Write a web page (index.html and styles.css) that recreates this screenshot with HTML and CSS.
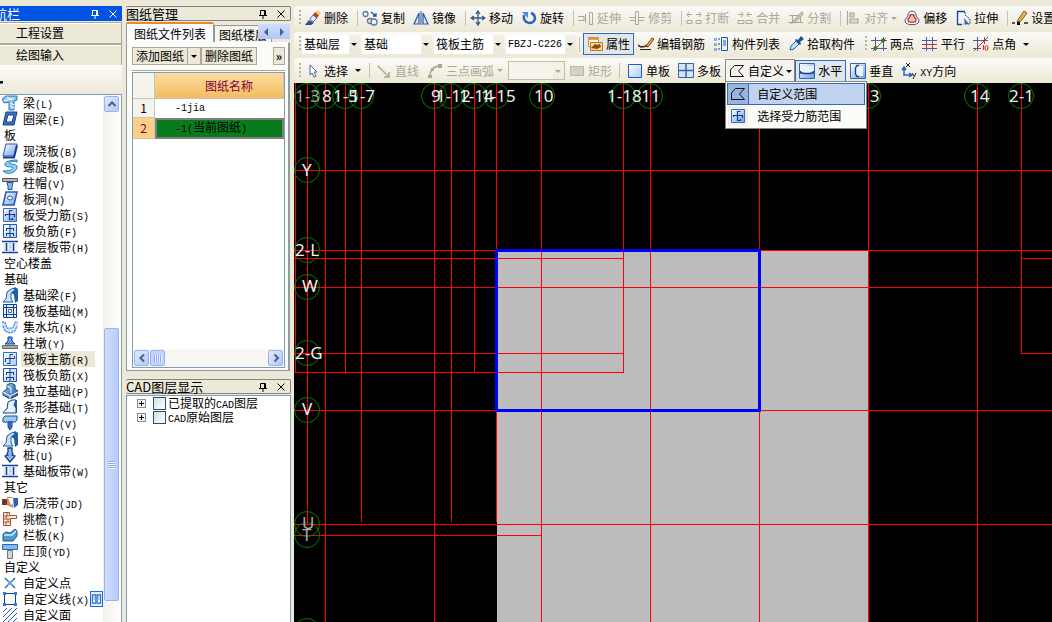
FILE: index.html
```html
<!DOCTYPE html>
<html lang="zh-CN">
<head>
<meta charset="utf-8">
<title>图纸管理</title>
<link rel="stylesheet" href="styles.css">
</head>
<body>
<svg class="defs" aria-hidden="true">
  <defs>
    <linearGradient id="gb" x1="0" y1="0" x2="1" y2="1"><stop offset="0" stop-color="#fff"/><stop offset="1" stop-color="#6f9fe8"/></linearGradient>
    <linearGradient id="gl" x1="0" y1="0" x2="1" y2="1"><stop offset="0" stop-color="#fff"/><stop offset="1" stop-color="#a9c8f6"/></linearGradient>
    <linearGradient id="gd" x1="0" y1="0" x2="1" y2="1"><stop offset="0" stop-color="#9fd0f4"/><stop offset="1" stop-color="#174f9c"/></linearGradient>
    <symbol id="pin" viewBox="0 0 10 10"><path d="M2.500 1.500h5v5M2.500 1.500v5M6.500 1.500v5M1 6.500h8M5 7v3" fill="none" stroke="currentColor"/></symbol>
    <symbol id="close" viewBox="0 0 10 10"><path d="M1.500 1.500l7 7M8.500 1.500l-7 7" fill="none" stroke="currentColor"/></symbol>
    <symbol id="beam" viewBox="0 0 16 16"><path d="M0 4l4-3h11v4l-3 1v9H7V7L2 8z" fill="#8cc4ee" stroke="#2a78b8"/><path d="M2 6l10-3M5 2l5 3M8 8l4 2M8 11l4 2" stroke="#f2faff" stroke-width="1.300"/></symbol>
    <symbol id="ring" viewBox="0 0 16 16"><path d="M4 1h11l-3 13H1z" fill="#3f71c4" stroke="#123f91"/><path d="M6 4h6l-2 7H4z" fill="#fff" stroke="#123f91"/></symbol>
    <symbol id="slab" viewBox="0 0 16 16"><path d="M4 1h11l-3 12H1z" fill="url(#gb)" stroke="#2458b0"/><path d="M1 14.500h11l3-12" fill="none" stroke="#123f91" stroke-width="2"/></symbol>
    <symbol id="spiral" viewBox="0 0 16 16"><path d="M15 1C8 1 2 3 3 6c1 3 8 1 8 3s-5 3-10 3c5 5 14 1 14-4 0-4-8-2-8-4 0-1 4-2 8-1z" fill="#8fd4f4" stroke="#2878b8"/></symbol>
    <symbol id="cap" viewBox="0 0 16 16"><path d="M.500 3.500h15v3H.500z" fill="#b8b8b0" stroke="#555"/><path d="M5 7.500h6l-1 4v3H6v-3z" fill="#8fb8f0" stroke="#1d4ea3"/></symbol>
    <symbol id="hole" viewBox="0 0 16 16"><path d="M4 1h11l-3 13H1z" fill="url(#gb)" stroke="#2458b0" stroke-width="1.500"/><ellipse cx="8" cy="7" rx="2.500" ry="2" fill="#fff" stroke="#2458b0"/></symbol>
    <symbol id="rebar" viewBox="0 0 16 16"><path d="M1.500 1.500h13v13h-13z" fill="url(#gb)" stroke="#3d6bbd"/><path d="M3.500 9V7.500h9V10M10.500 3.500h-3v9h3V11" fill="none" stroke="#123f91" stroke-width="1.200"/></symbol>
    <symbol id="neg" viewBox="0 0 16 16"><path d="M1.500 1.500h13v13h-13z" fill="url(#gl)" stroke="#2458b0"/><path d="M8 2v12M4 5.500h8M4 10.500h8M4.500 5v3M4.500 10v3M11.500 5v3M11.500 10v3" fill="none" stroke="#123f91"/></symbol>
    <symbol id="strip" viewBox="0 0 16 16"><path d="M1 4h14v8H1z" fill="#e6effc"/><path d="M0 2.500h16M0 13.500h16" stroke="#123f91" stroke-width="1.500"/><path d="M4.500 4v8M11.500 4v8" stroke="#123f91" stroke-width="1.500"/><path d="M8 4v9" stroke="#6d90cc" stroke-dasharray="1 1"/></symbol>
    <symbol id="found" viewBox="0 0 16 16"><path d="M8 4l5-4 3 2v12l-3 2-1-8z" fill="#1d5fa8"/><path d="M5 5l6-4 2 2-4 3v6l2 3H1l3-3z" fill="#c6e1f8" stroke="#1d5fa8"/></symbol>
    <symbol id="raft" viewBox="0 0 16 16"><path d="M1.500 1.500h13v13h-13z" fill="#e3eefd" stroke="#123f91"/><path d="M4.500 1v14M11.500 1v14M1 4.500h14M1 11.500h14" stroke="#123f91"/><path d="M6.500 6.500h3v3h-3z" fill="#fff" stroke="#3c6cc0"/></symbol>
    <symbol id="sump" viewBox="0 0 16 16"><path d="M0 3h3l2 6h6l2-6h3v5l-3 5-5 2-5-2-3-5z" fill="#c9e2fb"/><path d="M0 3h3l2 6h6l2-6h3M1 7l2 5 5 2 5-2 2-5" fill="none" stroke="#2568ba" stroke-dasharray="2 1"/></symbol>
    <symbol id="pier" viewBox="0 0 16 16"><path d="M6 2h4v4l3 3H3l3-3z" fill="#6f9fe8" stroke="#123f91"/><path d="M.500 10.500h15v3H.500z" fill="#aaa" stroke="#666"/></symbol>
    <symbol id="main" viewBox="0 0 16 16"><path d="M1.500 1.500h13v13h-13z" fill="url(#gl)" stroke="#2f6fce"/><path d="M3.500 11V7.500h9V5M5 12.500h3v-9h3" fill="none" stroke="#123f91"/></symbol>
    <symbol id="iso" viewBox="0 0 16 16"><path d="M1 9l4-3V2l4-2 4 2v4l3 2v4l-8 4-7-4z" fill="url(#gd)" stroke="#123f61"/><path d="M5 3l4 2v5M1 9l7 4 8-4M8 13v3" fill="none" stroke="#fff"/></symbol>
    <symbol id="bar" viewBox="0 0 16 16"><path d="M9 1h6v13h-3z" fill="#1d5fa8"/><path d="M6 3l4-2h4l-2 5 2 3v5H1l3-4h1z" fill="#e6f3ff" stroke="#17457f"/></symbol>
    <symbol id="pcap" viewBox="0 0 16 16"><path d="M1 3l2-2h12v4l-2 2H1z" fill="#9ccaf3" stroke="#164c91"/><path d="M6 7h4v5l-2 3-2-3z" fill="#2c75c7" stroke="#164c91"/></symbol>
    <symbol id="pile" viewBox="0 0 16 16"><path d="M6 1h4v4l1 2-1 1 3 1-5 6-5-6 3-1-1-1 1-2z" fill="#8fb8f0" stroke="#123f81" stroke-width="1.300"/></symbol>
    <symbol id="pour" viewBox="0 0 16 16"><path d="M0 4h6v6H0z" fill="#6a3b28"/><path d="M5 2h6v11L5 10z" fill="#c8916f"/><path d="M6 3h5l1 5-3 2z" fill="#fff"/><path d="M11 3h5v7l-4 3z" fill="#2b63ad"/></symbol>
    <symbol id="eave" viewBox="0 0 16 16"><path d="M1.500 1.500h6v3h7v3h-6v7h-7z" fill="#fff0e4" stroke="#a65327"/><path d="M2 5h5M2 8h6M2 11h6M5 2v3M4 5v3M6 8v3M4 11v3" stroke="#a65327"/></symbol>
    <symbol id="rail" viewBox="0 0 16 16"><path d="M1 7l3-2 4 1 5-4 2 2v5l-4 5H1z" fill="#4d9bd0" stroke="#1c5684"/><path d="M2 8h8l4-4" fill="none" stroke="#c8ecff" stroke-width="1.500"/></symbol>
    <symbol id="coping" viewBox="0 0 16 16"><path d="M.500 1.500h15v5H.500z" fill="#86b8ee" stroke="#2568ba"/><path d="M5.500 7.500h5v8h-5z" fill="#d2d2d2" stroke="#777"/></symbol>
    <symbol id="pt" viewBox="0 0 16 16"><path d="M3 3l10 10M13 3L3 13" stroke="#2458b0" stroke-width="1.300"/><path d="M6 6h4v4H6z" fill="#5bb0ef"/></symbol>
    <symbol id="ln" viewBox="0 0 16 16"><path d="M2.500 2.500h11v11h-11z" fill="none" stroke="#123f91"/><path d="M1 1h3v3H1zM12 1h3v3h-3zM1 12h3v3H1zM12 12h3v3h-3z" fill="#2f7ae0"/></symbol>
    <symbol id="face" viewBox="0 0 16 16"><path d="M1 5l4-4M1 10l9-9M1 15L15 1M6 15l9-9M11 15l4-4" stroke="#2458b0"/></symbol>
    <symbol id="cols" viewBox="0 0 16 16"><path d="M2 2h5v12H2zM9 2h5v12H9z" fill="#fff" stroke="#1c6bd0" stroke-width="1.500"/><path d="M3 5h3M3 8h3M10 5h3M10 8h3" stroke="#1c6bd0"/></symbol>

    <symbol id="erase" viewBox="0 0 16 16"><path d="M0 15l4-5 5 3-3 2z" fill="#27518f"/><path d="M5 9l3-4 4 3-4 4z" fill="#e7edf7" stroke="#56719f"/><path d="M8 5l2-3 4 3-2 3z" fill="#c43b2c"/><path d="M10 2l3-2 3 3-2 2z" fill="#f3cf62"/></symbol>
    <symbol id="copy" viewBox="0 0 16 16"><g fill="#eef3f9" stroke="#5b779c" stroke-width="1.300"><circle cx="3.500" cy="4" r="2.500"/><circle cx="8" cy="11" r="2.500"/><circle cx="12" cy="12" r="3"/></g><path d="M9 2l5 4m0-3v3h-3" fill="none" stroke="#23549d" stroke-width="1.300"/></symbol>
    <symbol id="mirror" viewBox="0 0 16 16"><path d="M6 3v11H1zM10 3v11h5z" fill="#dce8fa" stroke="#2857a4" stroke-width="1.200"/><path d="M8 1v14" stroke="#2857a4"/></symbol>
    <symbol id="move" viewBox="0 0 16 16"><path d="M8 1v14M1 8h14M6 4l2-3 2 3M6 12l2 3 2-3M4 6L1 8l3 2M12 6l3 2-3 2" fill="none" stroke="#36588c" stroke-width="1.300"/></symbol>
    <symbol id="rotate" viewBox="0 0 16 16"><path d="M3 5c-2 8 9 11 11 4 0-3-1-5-4-6" fill="none" stroke="#2762c3" stroke-width="2.500"/><path d="M1 2h6v6z" fill="#4e8be0"/></symbol>
    <symbol id="extend" viewBox="0 0 16 16"><path d="M0 6.500h6v4H0M7.500 4v9M11.500 2.500h3v12h-3z" fill="none" stroke="#aca899"/></symbol>
    <symbol id="trim" viewBox="0 0 16 16"><path d="M0 7.500h6M10 7.500h6M1 10.500h5M10 10.500h5M6.500 1.500h3v13h-3z" fill="none" stroke="#aca899"/></symbol>
    <symbol id="brk" viewBox="0 0 16 16"><path d="M1 4.500h5M10 4.500h5M3 2L1 4.500 3 7M13 2l2 2.500L13 7M1 10.500h5v3H1zM10 10.500h5v3h-5z" fill="none" stroke="#aca899"/></symbol>
    <symbol id="join" viewBox="0 0 16 16"><path d="M1 4.500h5M10 4.500h5M4 2l2 2.500L4 7M12 2l-2 2.500L12 7M1 10.500h6v3H1zM9 10.500h6v3H9z" fill="none" stroke="#aca899"/></symbol>
    <symbol id="split" viewBox="0 0 16 16"><path d="M1 5.500h9M0 12.500h15M3 14L14 2l1 2L6 13M4.500 5v8M12.500 7v6" fill="none" stroke="#aca899" stroke-width="1.200"/></symbol>
    <symbol id="align" viewBox="0 0 16 16"><path d="M2.500 1v14M5 3h4v4H5zM5 9h8v4H5z" fill="#ddd9ca" stroke="#aca899" stroke-width="1.200"/></symbol>
    <symbol id="offset" viewBox="0 0 16 16"><path d="M1 11c0-3 3-3 3-6 0-5 8-5 8 0 0 3 3 3 3 6 0 5-14 5-14 0z" fill="#fff" stroke="#274f89"/><path d="M4 10c0-2 2-2 2-4 0-2 4-2 4 0 0 2 2 2 2 4 0 3-8 3-8 0z" fill="#f5c4bc" stroke="#c83828" stroke-width="1.500"/></symbol>
    <symbol id="stretch" viewBox="0 0 16 16"><path d="M10 1.500H2.500v13H7" fill="#eef3fd" stroke="#174981" stroke-width="1.300"/><path d="M10 2v3l5 4v5H8" fill="none" stroke="#174981" stroke-dasharray="2 1"/><path d="M9 8l5 6h-4z" fill="#2c64b6"/></symbol>
    <symbol id="setup" viewBox="0 0 16 16"><path d="M0 13h3M12 13h4" stroke="#222" stroke-width="1.500"/><path d="M5 12h3v3H5z"/><path d="M6 10l6-9 3 2-6 8-4 1z" fill="#e7b849" stroke="#8a5a1c"/></symbol>
    <symbol id="prop" viewBox="0 0 16 16"><path d="M1.500 1.500h10v9h-10z" fill="#fff" stroke="#c38b3c"/><path d="M1 2h11v2H1z" fill="#e89a39"/><path d="M3.500 6.500h12v8h-12z" fill="#fbd687" stroke="#bd7820"/><path d="M4 12l4-4 2 1 3-1 1 3-4 2z" fill="#7e5011"/></symbol>
    <symbol id="edit" viewBox="0 0 16 16"><path d="M2 13.500h11" stroke="#222"/><path d="M8 10l6-8 2 1-6 8z" fill="#e7b849" stroke="#7a4018"/><path d="M0 9l3 2 6-1" fill="none" stroke="#222" stroke-width="1.500"/><path d="M6 11l3-2" stroke="#b52b20" stroke-width="1.500"/></symbol>
    <symbol id="list" viewBox="0 0 16 16"><path d="M1 2h3v3H1zM1 7h3v3H1zM1 12h3v3H1z" fill="#8caee0"/><path d="M5 3h2M5 8h2M5 13h2" stroke="#174981"/><path d="M8.500 1.500h6v13h-6z" fill="#e9f2ff" stroke="#2458b0"/><path d="M10 5h3M10 7h3M10 9h3" stroke="#2458b0"/></symbol>
    <symbol id="pick" viewBox="0 0 16 16"><path d="M2 14l1-4 5-5 3 3-5 5z" fill="#c4e1fa" stroke="#315f97"/><path d="M7 4l1-1 2 1 3-4 3 3-4 3 1 2-1 1z" fill="#12569f"/></symbol>
    <symbol id="twopt" viewBox="0 0 16 16"><path d="M4.500 1v14M12.500 1v14M0 4.500h16M0 12.500h16" stroke="#4d5e9c"/><path d="M2 15L15 2" stroke="#c33"/><circle cx="4.500" cy="12" r="2" fill="#30751f"/><circle cx="12" cy="4.500" r="2" fill="#30751f"/></symbol>
    <symbol id="para" viewBox="0 0 16 16"><path d="M4.500 1v14M10.500 1v14M0 4.500h15M0 12.500h15" stroke="#4d5e9c"/><path d="M0 8.500h15" stroke="#d22"/></symbol>
    <symbol id="angle" viewBox="0 0 16 16"><path d="M4.500 1v14M11.500 1v7M0 4.500h15M0 12.500h8" stroke="#4d5e9c"/><path d="M1 15L15 1M10.500 9v5" stroke="#d22"/><ellipse cx="13.500" cy="12" rx="1.500" ry="2.500" fill="none" stroke="#d22"/></symbol>
    <symbol id="cursor" viewBox="0 0 16 16"><path d="M5 2v10l2-2 2 4 2-1-2-4h3z" fill="#fff" stroke="#45699d"/></symbol>
    <symbol id="line" viewBox="0 0 16 16"><path d="M2 3l11 11M13 9v5H8" fill="none" stroke="#aca899" stroke-width="1.500"/></symbol>
    <symbol id="arc" viewBox="0 0 16 16"><path d="M3 14C3 7 6 3 13 3" fill="none" stroke="#aca899" stroke-width="1.500"/><path d="M1 12h4v3H1zM4 5h3v3H4zM11 1h4v4h-4z" fill="#aca899"/></symbol>
    <symbol id="rect" viewBox="0 0 16 16"><path d="M1.500 3.500h13v9h-13z" fill="#d5d1c4" stroke="#bdb9aa"/></symbol>
    <symbol id="single" viewBox="0 0 16 16"><path d="M1.500 1.500h13v13h-13z" fill="url(#gl)" stroke="#2458c8"/></symbol>
    <symbol id="multi" viewBox="0 0 16 16"><path d="M.500.500h15v14H.500z" fill="#d5e6fb" stroke="#3b659c"/><path d="M8 1v14M1 7.500h15" stroke="#3b659c" stroke-width="1.500"/></symbol>
    <symbol id="poly" viewBox="0 0 16 16"><path d="M1.500 13.500V7l4-4.500h9L9.500 8l5 5.500z" fill="none" stroke="#111"/></symbol>
    <symbol id="horiz" viewBox="0 0 16 16"><path d="M.500.500h15v15H.500z" fill="url(#gb)" stroke="#3764b4"/><path d="M1 8h2v2h10V8h2V3H1z" fill="#eaf2fe"/><path d="M1.500 8v2h3M14.500 8v2h-3M4 10.500h8" fill="none" stroke="#173f83" stroke-width="1.300"/></symbol>
    <symbol id="vert" viewBox="0 0 16 16"><path d="M.500.500h15v15H.500z" fill="url(#gb)" stroke="#3764b4"/><path d="M5 3h8v10H5z" fill="#eaf2fe"/><path d="M9 2.500H7L5.500 5v6L7 13.500h2" fill="none" stroke="#173f83" stroke-width="1.300"/></symbol>
    <symbol id="xy" viewBox="0 0 16 16"><path d="M3 5v7h7M1 7l2-3 2 3M8 10l3 2-3 2" fill="none" stroke="#2762c3" stroke-width="1.500"/><path d="M5 0l4 4M9 0L5 4M11 10l2 3M15 10l-3 6" stroke="#222"/></symbol>
  </defs>
</svg>

<div class="app">
  <aside class="nav">
    <header class="nav-title"><span class="nav-name">航栏</span><button class="tool-btn" aria-label="固定"><svg><use href="#pin"/></svg></button><button class="tool-btn" aria-label="关闭"><svg><use href="#close"/></svg></button></header>
    <button class="group">工程设置</button>
    <button class="group">绘图输入</button>
    <div class="nav-strip"><i></i></div>
    <div class="nav-body">
      <ul class="tree">
        <li><svg><use href="#beam"/></svg><span>梁<b>(L)</b></span></li>
        <li><svg><use href="#ring"/></svg><span>圈梁<b>(E)</b></span></li>
        <li class="cat">板</li>
        <li><svg><use href="#slab"/></svg><span>现浇板<b>(B)</b></span></li>
        <li><svg><use href="#spiral"/></svg><span>螺旋板<b>(B)</b></span></li>
        <li><svg><use href="#cap"/></svg><span>柱帽<b>(V)</b></span></li>
        <li><svg><use href="#hole"/></svg><span>板洞<b>(N)</b></span></li>
        <li><svg><use href="#rebar"/></svg><span>板受力筋<b>(S)</b></span></li>
        <li><svg><use href="#neg"/></svg><span>板负筋<b>(F)</b></span></li>
        <li><svg><use href="#strip"/></svg><span>楼层板带<b>(H)</b></span></li>
        <li class="cat">空心楼盖</li>
        <li class="cat">基础</li>
        <li><svg><use href="#found"/></svg><span>基础梁<b>(F)</b></span></li>
        <li><svg><use href="#raft"/></svg><span>筏板基础<b>(M)</b></span></li>
        <li><svg><use href="#sump"/></svg><span>集水坑<b>(K)</b></span></li>
        <li><svg><use href="#pier"/></svg><span>柱墩<b>(Y)</b></span></li>
        <li class="sel"><svg><use href="#main"/></svg><span>筏板主筋<b>(R)</b></span></li>
        <li><svg><use href="#neg"/></svg><span>筏板负筋<b>(X)</b></span></li>
        <li><svg><use href="#iso"/></svg><span>独立基础<b>(P)</b></span></li>
        <li><svg><use href="#bar"/></svg><span>条形基础<b>(T)</b></span></li>
        <li><svg><use href="#pcap"/></svg><span>桩承台<b>(V)</b></span></li>
        <li><svg><use href="#found"/></svg><span>承台梁<b>(F)</b></span></li>
        <li><svg><use href="#pile"/></svg><span>桩<b>(U)</b></span></li>
        <li><svg><use href="#strip"/></svg><span>基础板带<b>(W)</b></span></li>
        <li class="cat">其它</li>
        <li><svg><use href="#pour"/></svg><span>后浇带<b>(JD)</b></span></li>
        <li><svg><use href="#eave"/></svg><span>挑檐<b>(T)</b></span></li>
        <li><svg><use href="#rail"/></svg><span>栏板<b>(K)</b></span></li>
        <li><svg><use href="#coping"/></svg><span>压顶<b>(YD)</b></span></li>
        <li class="cat">自定义</li>
        <li><svg><use href="#pt"/></svg><span>自定义点</span></li>
        <li><svg><use href="#ln"/></svg><span>自定义线<b>(X)</b></span><svg class="framed"><use href="#cols"/></svg></li>
        <li><svg><use href="#face"/></svg><span>自定义面</span></li>
      </ul>
      <div class="vscroll"><button class="sb" aria-label="向上"><svg viewBox="0 0 10 10"><path d="M1.500 7L5 3.500 8.500 7"/></svg></button><div class="thumb"><i></i></div></div>
    </div>
  </aside>

  <section class="side">
    <header class="panel-title"><span>图纸管理</span><button class="tool-btn" aria-label="固定"><svg><use href="#pin"/></svg></button><button class="tool-btn" aria-label="关闭"><svg><use href="#close"/></svg></button></header>
    <div class="tabs"><button class="tab active">图纸文件列表</button><button class="tab">图纸楼层</button><div class="tab-nav"><button aria-label="上一页"><i class="left"></i></button><button aria-label="下一页"><i class="right"></i></button></div></div>
    <div class="sheet">
      <div class="sheet-tools"><button class="flat">添加图纸</button><button class="flat drop" aria-label="更多添加"><i class="down"></i></button><button class="flat">删除图纸</button><button class="flat more">»</button></div>
      <div class="grid-box">
        <table class="grid">
          <thead><tr><th></th><th class="name">图纸名称</th></tr></thead>
          <tbody><tr><th>1</th><td>-1jia</td></tr><tr class="current"><th>2</th><td>-1(<span>当前图纸</span>)</td></tr></tbody>
        </table>
        <div class="hscroll"><button class="sb" aria-label="向左"><svg viewBox="0 0 10 10"><path d="M7 1.500L3.500 5 7 8.500"/></svg></button><div class="hthumb"><i></i></div><button class="sb end" aria-label="向右"><svg viewBox="0 0 10 10"><path d="M3.500 1.500L7 5 3.500 8.500"/></svg></button></div>
      </div>
    </div>
    <header class="panel-title"><span>CAD图层显示</span><button class="tool-btn" aria-label="固定"><svg><use href="#pin"/></svg></button><button class="tool-btn" aria-label="关闭"><svg><use href="#close"/></svg></button></header>
    <div class="layers">
      <div class="layer"><button class="plus" aria-label="展开"></button><label><input type="checkbox"><span>已提取的<b>CAD</b>图层</span></label></div>
      <div class="layer"><button class="plus" aria-label="展开"></button><label><input type="checkbox"><span><b>CAD</b>原始图层</span></label></div>
    </div>
  </section>

  <main class="work">
    <div class="bars">
      <div class="bar">
        <i class="grip"></i>
        <button class="btn"><svg><use href="#erase"/></svg>删除</button><i class="sep"></i>
        <button class="btn"><svg><use href="#copy"/></svg>复制</button>
        <button class="btn"><svg><use href="#mirror"/></svg>镜像</button><i class="sep"></i>
        <button class="btn"><svg><use href="#move"/></svg>移动</button>
        <button class="btn"><svg><use href="#rotate"/></svg>旋转</button><i class="sep"></i>
        <button class="btn" disabled><svg><use href="#extend"/></svg>延伸</button>
        <button class="btn" disabled><svg><use href="#trim"/></svg>修剪</button><i class="sep"></i>
        <button class="btn" disabled><svg><use href="#brk"/></svg>打断</button>
        <button class="btn" disabled><svg><use href="#join"/></svg>合并</button>
        <button class="btn" disabled><svg><use href="#split"/></svg>分割</button><i class="sep"></i>
        <button class="btn" disabled><svg><use href="#align"/></svg>对齐<i class="down"></i></button>
        <button class="btn"><svg><use href="#offset"/></svg>偏移</button>
        <button class="btn"><svg><use href="#stretch"/></svg>拉伸</button><i class="sep"></i>
        <button class="btn"><svg><use href="#setup"/></svg>设置</button>
      </div>
      <div class="bar">
        <i class="grip"></i>
        <label class="pick short"><select aria-label="楼层"><option>基础层</option></select></label>
        <label class="pick"><select aria-label="构件类型"><option>基础</option></select></label>
        <label class="pick"><select aria-label="构件"><option>筏板主筋</option></select></label>
        <label class="pick code"><select aria-label="名称"><option>FBZJ-C226</option></select></label>
        <i class="sep tight"></i>
        <button class="btn on"><svg><use href="#prop"/></svg>属性</button>
        <button class="btn"><svg><use href="#edit"/></svg>编辑钢筋</button>
        <button class="btn"><svg><use href="#list"/></svg>构件列表</button>
        <button class="btn"><svg><use href="#pick"/></svg>拾取构件</button>
        <i class="grip second"></i>
        <button class="btn"><svg><use href="#twopt"/></svg>两点</button>
        <button class="btn"><svg><use href="#para"/></svg>平行</button>
        <button class="btn"><svg><use href="#angle"/></svg>点角<i class="down wide"></i></button>
      </div>
      <div class="bar">
        <i class="grip"></i>
        <button class="btn"><svg><use href="#cursor"/></svg>选择<i class="down wide"></i></button><i class="sep even"></i>
        <button class="btn" disabled><svg><use href="#line"/></svg>直线</button>
        <button class="btn" disabled><svg><use href="#arc"/></svg>三点画弧<i class="down"></i></button>
        <label class="pick off"><select aria-label="画弧方式" disabled><option></option></select></label>
        <button class="btn" disabled><svg><use href="#rect"/></svg>矩形</button><i class="sep tight"></i>
        <button class="btn"><svg><use href="#single"/></svg>单板</button>
        <button class="btn"><svg><use href="#multi"/></svg>多板</button>
        <div class="menu-host">
          <button class="btn open"><svg><use href="#poly"/></svg>自定义<i class="down"></i></button>
          <div class="menu">
            <button class="item hot"><span class="well"><svg><use href="#poly"/></svg></span>自定义范围</button>
            <button class="item"><span class="well"><svg><use href="#rebar"/></svg></span>选择受力筋范围</button>
          </div>
        </div>
        <button class="btn on"><svg><use href="#horiz"/></svg>水平</button>
        <button class="btn"><svg><use href="#vert"/></svg>垂直</button>
        <button class="btn"><svg><use href="#xy"/></svg><span><b>XY</b>方向</span></button>
      </div>
    </div>
    <div class="canvas">
      <svg class="plan">
        <rect x="203" y="167" width="372" height="100%" fill="#bcbcbc"/>
        <path class="axis" d="M1.500 0v290M13.500 0v441M31.500 0v2000M51.500 0v291M67.500 0v439M140.500 0v2000M157.500 0v439M180.500 0v290M202.500 0v439M247.500 0v2000M329.500 0v290M356.500 0v2000M465.500 0v2000M574.500 0v2000M683.500 0v2000M727.500 0v271M0 87.500h3000M0 167.500h3000M0 175.500h330M727 175.500h3000M0 204.500h3000M0 270.500h330M727 270.500h3000M0 289.500h330M0 327.500h3000M0 441.500h3000M0 452.500h248"/>
        <rect x="202.500" y="167.500" width="263" height="160" fill="none" stroke="#00f" stroke-width="3"/>
        <g class="ring">
          <circle cx="13" cy="13" r="12.500"/><circle cx="31" cy="13" r="12.500"/><circle cx="51" cy="13" r="12.500"/><circle cx="67" cy="13" r="12.500"/><circle cx="140" cy="13" r="12.500"/><circle cx="157" cy="13" r="12.500"/><circle cx="180" cy="13" r="12.500"/><circle cx="202" cy="13" r="12.500"/><circle cx="248" cy="13" r="12.500"/><circle cx="329" cy="13" r="12.500"/><circle cx="356" cy="13" r="12.500"/><circle cx="574" cy="13" r="12.500"/><circle cx="683" cy="13" r="12.500"/><circle cx="727" cy="13" r="12.500"/>
          <circle cx="13" cy="87" r="12.500"/><circle cx="13" cy="167" r="12.500"/><circle cx="13" cy="204" r="12.500"/><circle cx="13" cy="270" r="12.500"/><circle cx="13" cy="327" r="12.500"/><circle cx="13" cy="441" r="12.500"/><circle cx="13" cy="452" r="12.500"/><circle cx="13" cy="548" r="12.500"/>
        </g>
        <g class="tag">
          <text class="dim" x="1" y="19">1-3</text><text x="28" y="19">8</text><text x="39" y="19">1-5</text><text x="56" y="19">1-7</text><text x="137" y="19">9</text><text x="142" y="19">1-12</text><text x="165" y="19">1-14</text><text x="187" y="19">1-15</text><text x="240" y="19">10</text><text x="313" y="19">1-18</text><text x="347" y="19">11</text><text x="566" y="19">13</text><text x="676" y="19">14</text><text x="715" y="19">2-1</text>
          <text x="8" y="93">Y</text><text x="1" y="173">2-L</text><text x="8" y="209">W</text><text x="1" y="276">2-G</text><text x="8" y="332">V</text><text class="dim" x="8" y="446">U</text><text class="dim" x="8" y="458">T</text>
        </g>
      </svg>
    </div>
  </main>
</div>
</body>
</html>
```

FILE: styles.css
```css
* { box-sizing: border-box; }
html, body { height: 100%; }
body {
  margin: 0;
  overflow: hidden;
  background: #ece9d8;
  color: #000;
  font: 12px/16px "Noto Sans CJK SC", sans-serif;
}
button, select, input { font: inherit; color: inherit; margin: 0; }
button { border: 0; padding: 0; background: none; white-space: nowrap; }
b { font: 10px "Liberation Mono", monospace; }
.defs { position: absolute; width: 0; height: 0; }

.app { display: flex; height: 100vh; padding-top: 6px; gap: 4px; overflow: hidden; }

/* arrows */
.down { width: 0; border: 3px solid transparent; border-top-color: currentColor; border-bottom: 0; flex: none; }
.left { border: 4px solid transparent; border-right-color: #3c5f9e; border-left: 0; }
.right { border: 4px solid transparent; border-left-color: #3c5f9e; border-right: 0; }

/* navigation */
.nav { flex: 0 0 122px; display: flex; flex-direction: column; min-height: 0; }
.nav-title { display: flex; align-items: center; height: 15px; background: #0054e3; color: #fff; font-size: 13px; flex: none; }
.nav-name { display: flex; justify-content: flex-end; width: 20px; margin-right: auto; overflow: hidden; white-space: nowrap; }
.tool-btn { width: 18px; height: 12px; display: flex; align-items: center; justify-content: center; }
.tool-btn svg { width: 10px; height: 10px; }
.group { height: 22px; padding-left: 16px; text-align: left; border: solid #aca899; border-width: 1px 1px 1px 0; background: #ece9d8; box-shadow: inset 0 1px #fff; margin-top: 1px; margin-bottom: -1px; flex: none; }
.nav-strip { height: 29px; display: flex; align-items: center; padding-top: 6px; background: linear-gradient(#fcfbf8, #ece9d8); flex: none; }
.nav-strip i { width: 3px; height: 3px; background: #111; border-bottom: 1px solid #199; }
.nav-body { flex: 1; min-height: 0; display: flex; background: #fff; border: solid #7f9db9; border-width: 1px 1px 0 0; overflow: hidden; }
.tree { flex: 1; min-width: 0; margin: 0; padding: 0; list-style: none; overflow: hidden; }
.tree li { display: flex; align-items: center; height: 16px; padding-left: 2px; gap: 3px; white-space: nowrap; }
.tree li > svg { width: 16px; height: 16px; flex: none; }
.tree li > span { padding: 0 2px; line-height: 16px; }
.tree li.cat { padding-left: 4px; }
.tree li.sel span { background: #ece9d8; padding-right: 6px; }
.tree li > .framed { width: 13px; border: 1px solid #1c6bd0; margin-left: -4px; background: #e3effc; }
.vscroll { flex: 0 0 18px; background: linear-gradient(90deg, #f3f1ec, #fefefb); padding: 1px 2px 1px 1px; display: flex; flex-direction: column; }
.sb { width: 15px; height: 16px; border: 1px solid #98b5ea; border-radius: 2px; background: linear-gradient(135deg, #e1eafe, #b2c8f8); display: flex; align-items: center; justify-content: center; flex: none; }
.sb svg { width: 10px; height: 10px; }
.sb path { fill: none; stroke: #4d6185; stroke-width: 2; }
.thumb { margin-top: auto; margin-bottom: 20px; height: 52%; border: 1px solid #98b5ea; border-radius: 2px; background: linear-gradient(90deg, #cfdcfd, #b9ccf9); display: flex; align-items: center; justify-content: center; }
.thumb i { width: 7px; height: 8px; background: repeating-linear-gradient(#8caafa 0 1px, #eef4fe 1px 2px); }

/* drawing manager */
.side { flex: 0 0 165px; display: flex; flex-direction: column; min-height: 0; min-width: 0; }
.panel-title { display: flex; align-items: center; height: 15px; border: 1px solid #84827a; border-left: 0; border-radius: 2px; font-size: 13px; line-height: 13px; flex: none; }
.panel-title span { margin-right: auto; }
.tabs { display: flex; align-items: flex-end; height: 20px; margin-top: 1px; overflow: hidden; flex: none; position: relative; }
.tab { height: 17px; padding: 0 4px; border: 1px solid #919b9c; border-bottom: 0; background: #f6f5ee; line-height: 15px; flex: none; }
.tab.active { height: 20px; padding: 0 7px; border-top: 2px solid #e68b2c; border-radius: 2px 2px 0 0; background: #fcfcfe; }
.tab-nav { position: absolute; right: 1px; top: 2px; display: flex; }
.tab-nav button { width: 16px; height: 15px; display: flex; align-items: center; justify-content: center; background: linear-gradient(#cfdcfd, #b4c8f6); }
.sheet { height: 329px; margin-right: 1px; padding: 4px 3px 2px 5px; border: 1px solid #919b9c; border-right-width: 2px; border-top-color: #fcfcfe; background: #fbfbf8; display: flex; flex-direction: column; flex: none; }
.sheet-tools { display: flex; height: 24px; border-bottom: 1px solid #aca899; flex: none; }
.flat { height: 18px; padding: 0 3px; border: 1px solid #aca899; background: #ece9d8; line-height: 14px; }
.flat.drop { width: 13px; padding: 0; border-left: 0; display: flex; align-items: center; justify-content: center; }
.flat.more { width: 12px; padding: 0; margin-left: auto; font-weight: 700; }
.grid-box { flex: 1; margin-top: 1px; border: 1px solid #7f9db9; background: #fff; display: flex; flex-direction: column; overflow: hidden; }
.grid { width: 100%; border-collapse: separate; border-spacing: 0; table-layout: fixed; line-height: 14px; }
.grid th { width: 22px; height: 19px; padding: 0; font-weight: 400; background: #f5f4ec; border: solid #c8c5b6; border-width: 0 1px 1px 0; }
.grid thead th { height: 26px; }
.grid .name { width: auto; padding-left: 50px; text-align: left; color: #800040; background: linear-gradient(#fbdc9f, #f3bd60); }
.grid td { height: 19px; padding: 0 0 0 20px; font: 10px/14px "Liberation Mono", monospace; }
.grid td span { font: 12px/14px "Noto Sans CJK SC", sans-serif; }
.grid .current th { background: #fccf86; color: #800040; }
.grid .current td { padding: 0 0 0 18px; background: #087c1b; border: 2px solid #808080; }
.hscroll { display: flex; height: 18px; margin-top: auto; padding: 1px; background: #f7f6f2; }
.hthumb { width: 15px; border: 1px solid #98b5ea; border-radius: 2px; background: #c3d3fd; margin-left: 1px; display: flex; align-items: center; justify-content: center; }
.hthumb i { width: 8px; height: 7px; background: repeating-linear-gradient(90deg, #8caafa 0 1px, #eef4fe 1px 2px); }
.end { margin-left: auto; }
.sheet + .panel-title { margin-top: 8px; }
.layers { flex: 1; margin-top: 1px; border: 1px solid #7f9db9; border-bottom: 0; padding-left: 10px; background: #fff; }
.layer { display: flex; align-items: center; height: 14px; gap: 7px; }
.plus { width: 9px; height: 9px; border: 1px solid #7d8ea8; background: linear-gradient(#000, #000) center / 5px 1px no-repeat, linear-gradient(#000, #000) center / 1px 5px no-repeat, #f4f3ee; }
.layer label { display: flex; align-items: center; gap: 2px; line-height: 14px; white-space: nowrap; }
.layer input { appearance: none; width: 13px; height: 13px; border: 1px solid #1c5180; background: linear-gradient(135deg, #dcdcd7, #fff); }

/* toolbars */
.work { flex: 1; min-width: 0; display: flex; flex-direction: column; margin-left: -1px; }
.bars { flex: none; position: relative; z-index: 1; }
.bar { display: flex; align-items: center; height: 24px; padding-left: 5px; margin-bottom: 2px; border-radius: 3px 0 0 3px; background: linear-gradient(#fbfaf7, #ece9d8); white-space: nowrap; }
.bar:last-child { margin-bottom: 0; height: 25px; }
.bar > * { flex: none; }
.grip { width: 2px; height: 16px; background: repeating-linear-gradient(#b8b4a2 0 2px, transparent 2px 4px); }
.grip.second { margin: 0 0 0 6px; }
.sep { width: 1px; height: 15px; margin-left: 5px; background: #c5c2b2; }
.sep.tight { margin: 0 3px 0 3px; }
.sep.even { margin: 0 2px 0 5px; }
.btn { display: flex; align-items: center; height: 22px; padding: 0 4px; border: 0; }
.btn svg { width: 16px; height: 16px; margin-right: 3px; }
.btn:disabled { color: #aca899; }
.btn .down { margin-left: 3px; margin-right: -1px; }
.btn .down.wide { margin-left: 7px; }
.btn.on { padding: 0 3px; border: 1px solid #316ac5; background: #e1e6e8; }
.btn.open { width: 70px; height: 24px; padding: 0 3px; border: 1px solid #8a867a; border-bottom: 0; background: #f5f4ee; }
.btn.open .down { margin-left: 2px; }
.pick { display: flex; position: relative; width: 70px; height: 19px; margin-left: 2px; background: #fff; }
.pick.short { width: 58px; margin-left: 1px; }
.pick select { appearance: none; flex: 1; min-width: 0; padding: 0 12px 0 2px; border: 0; border-radius: 0; background: linear-gradient(#f3f1e8, #ece9d8) right / 11px 100% no-repeat; line-height: 16px; }
.pick.code select { font: 10px/19px "Liberation Mono", monospace; }
.pick::after { content: ""; position: absolute; right: 3px; top: 8px; border: 3px solid transparent; border-top-color: #000; border-bottom: 0; }
.pick.off { width: 57px; border: 1px solid #c0bcac; background: #f5f4ea; }
.pick.off::after { border-top-color: #aca899; }
.menu-host { position: relative; }
.menu { position: absolute; left: 0; top: 22px; width: 142px; padding: 1px; border: 1px solid #8a867a; background: #fcfcf9; }
.item { display: flex; align-items: center; width: 100%; height: 22px; gap: 9px; border: 1px solid transparent; }
.item.hot { border-color: #316ac5; background: #c1d2ee; }
.well { width: 20px; height: 20px; display: flex; align-items: center; justify-content: center; background: #f1efe6; }
.well svg { width: 16px; height: 16px; }
.item.hot .well { background: #98b5e2; box-shadow: 0 0 0 1px #316ac5; }

/* drawing */
.canvas { flex: 1; min-height: 0; background: #000; overflow: hidden; }
.plan { display: block; width: 100%; height: 100%; }
.axis { fill: none; stroke: #f00; stroke-width: 1; shape-rendering: crispEdges; }
.ring { fill: none; stroke: #008000; stroke-width: 1; }
.tag { font: 17px "Noto Sans", sans-serif; fill: #eee; }
.dim { fill: #aaa; }
```
